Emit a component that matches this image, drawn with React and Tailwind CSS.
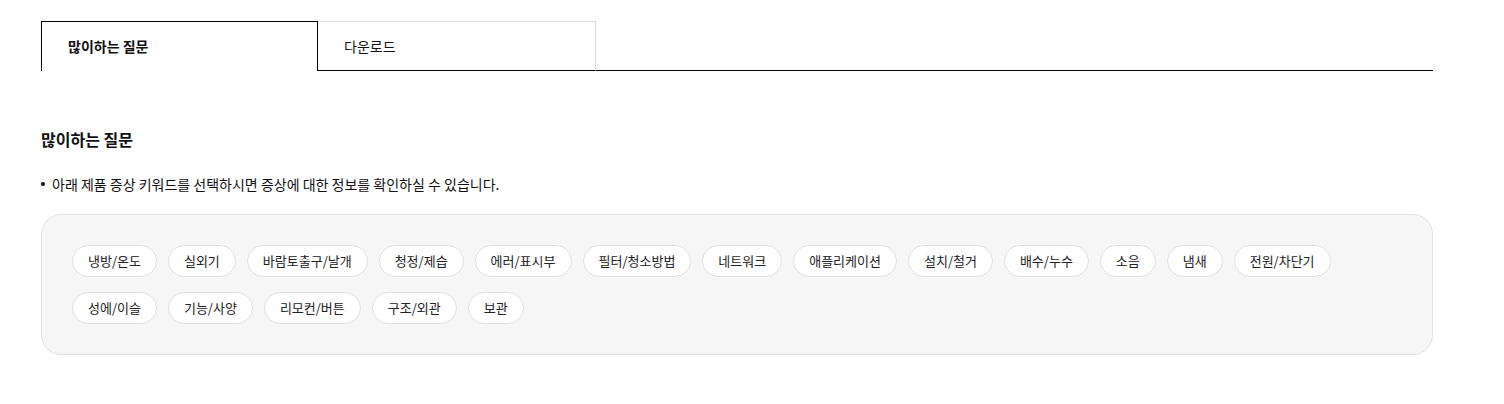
import { useState } from 'react';

const keywords = [
  '냉방/온도', '실외기', '바람토출구/날개', '청정/제습', '에러/표시부', '필터/청소방법', '네트워크',
  '애플리케이션', '설치/철거', '배수/누수', '소음', '냄새', '전원/차단기',
  '성에/이슬', '기능/사양', '리모컨/버튼', '구조/외관', '보관',
];

export default function App() {
  const [tab, setTab] = useState(0);
  const tabs = ['많이하는 질문', '다운로드'];

  return (
    <div className="min-h-screen bg-white pt-[21px] text-[#111] font-['Malgun_Gothic','Noto_Sans_CJK_KR',sans-serif]">
      <div className="ml-[41px] w-[1392px]">
        {/* 탭 */}
        <div className="flex">
          {tabs.map((t, i) => (
            <button
              key={t}
              onClick={() => setTab(i)}
              className={
                i === tab
                  ? 'w-[277px] h-[50px] text-left pl-[26px] text-[14px] font-semibold border border-b-0 border-black bg-white'
                  : 'w-[278px] h-[50px] text-left pl-[26px] text-[14px] border-t border-r border-t-[#ddd] border-r-[#ddd] border-b border-b-black'
              }
            >
              {t}
            </button>
          ))}
          <div className="flex-1 border-b border-black" />
        </div>

        <h2 className="mt-[56px] text-[16px] font-bold leading-[24px]">많이하는 질문</h2>

        <p className="mt-[23px] flex items-center text-[14px] leading-[20px]">
          <span className="mr-[7px] inline-block w-[4px] h-[4px] rounded-full bg-[#111]" />
          아래 제품 증상 키워드를 선택하시면 증상에 대한 정보를 확인하실 수 있습니다.
        </p>

        <div className="mt-[20px] rounded-[20px] border border-[#e2e2e2] bg-[#f6f6f6] px-[30px] py-[30px]">
          <div className="flex flex-wrap gap-x-[11px] gap-y-[15px]">
            {keywords.map((k) => (
              <button
                key={k}
                className="h-[32px] rounded-full border border-[#e0e0e0] bg-white px-[15px] text-[13px] text-[#222]"
              >
                {k}
              </button>
            ))}
          </div>
        </div>
      </div>
    </div>
  );
}
